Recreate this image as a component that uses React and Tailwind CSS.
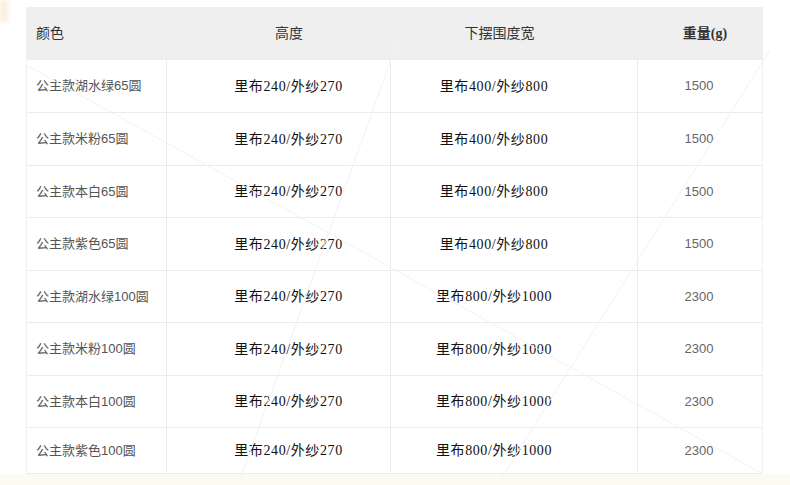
// 尺码表 — 公主款颜色 / 高度 / 下摆围度宽 / 重量
// 四列网格，浅灰表头，背景有几条很淡的斜线水印

const rows = [
  { color: '公主款湖水绿65圆', height: '里布240/外纱270', hem: '里布400/外纱800', weight: '1500', h: 'h-[53px]' },
  { color: '公主款米粉65圆', height: '里布240/外纱270', hem: '里布400/外纱800', weight: '1500', h: 'h-[53px]' },
  { color: '公主款本白65圆', height: '里布240/外纱270', hem: '里布400/外纱800', weight: '1500', h: 'h-[52px]' },
  { color: '公主款紫色65圆', height: '里布240/外纱270', hem: '里布400/外纱800', weight: '1500', h: 'h-[53px]' },
  { color: '公主款湖水绿100圆', height: '里布240/外纱270', hem: '里布800/外纱1000', weight: '2300', h: 'h-[52px]' },
  { color: '公主款米粉100圆', height: '里布240/外纱270', hem: '里布800/外纱1000', weight: '2300', h: 'h-[53px]' },
  { color: '公主款本白100圆', height: '里布240/外纱270', hem: '里布800/外纱1000', weight: '2300', h: 'h-[52px]' },
  { color: '公主款紫色100圆', height: '里布240/外纱270', hem: '里布800/外纱1000', weight: '2300', h: 'h-[46px]' },
]

const serif = 'font-["Liberation_Serif","Noto_Sans_CJK_SC",serif]'
const sans = 'font-["Liberation_Sans","Noto_Sans_CJK_SC",sans-serif]'

function Watermark() {
  // 背景淡斜线
  return (
    <svg className="absolute inset-0 pointer-events-none" width="790" height="485" viewBox="0 0 790 485">
      <g stroke="#f2f2f2" strokeWidth="1" fill="none">
        <line x1="26" y1="65" x2="763" y2="474" />
        <line x1="398" y1="40" x2="240" y2="480" />
        <line x1="770" y1="50" x2="500" y2="480" />
      </g>
    </svg>
  )
}

export default function App() {
  return (
    <div className="relative w-[790px] h-[485px] bg-white overflow-hidden">
      {/* 左上角一点暖色 */}
      <div className="absolute left-0 top-0 w-[8px] h-[22px] bg-[#fbeedd] blur-[2px]" />

      <div className="pt-[7px] pl-[26px]">
        <div className="w-[737px] border-l border-r border-[#f0f0f0]">
          {/* 表头 */}
          <div className={`grid grid-cols-[140px_224px_247px_126px] h-[53px] bg-[#efefef] text-[14px] text-[#333] ${serif}`}>
            <div className="flex items-center pl-[9px]">颜色</div>
            <div className="flex items-center justify-center pl-[20px]">高度</div>
            <div className="flex items-center justify-center pr-[30px]">下摆围度宽</div>
            <div className="flex items-center justify-center pl-[8px] font-bold">重量(g)</div>
          </div>

          {rows.map((r, i) => (
            <div
              key={i}
              className={`grid grid-cols-[140px_224px_247px_126px] ${r.h} border-b border-[#ebebeb]`}
            >
              <div className={`flex items-center pl-[9px] border-r border-[#ebebeb] text-[13px] text-[#555] ${sans}`}>
                {r.color}
              </div>
              <div className={`flex items-center justify-center pl-[20px] border-r border-[#ebebeb] text-[14px] tracking-[0.6px] text-[#111] ${serif}`}>
                {r.height}
              </div>
              <div className={`flex items-center justify-center pr-[40px] border-r border-[#ebebeb] text-[14px] tracking-[0.6px] text-[#111] ${serif}`}>
                {r.hem}
              </div>
              <div className={`flex items-center justify-center pr-[4px] text-[13px] text-[#666] ${sans}`}>
                {r.weight}
              </div>
            </div>
          ))}
        </div>
      </div>

      {/* 底部米色条 */}
      <div className="h-[11px] bg-[#fdfaf1]" />

      <Watermark />
    </div>
  )
}
